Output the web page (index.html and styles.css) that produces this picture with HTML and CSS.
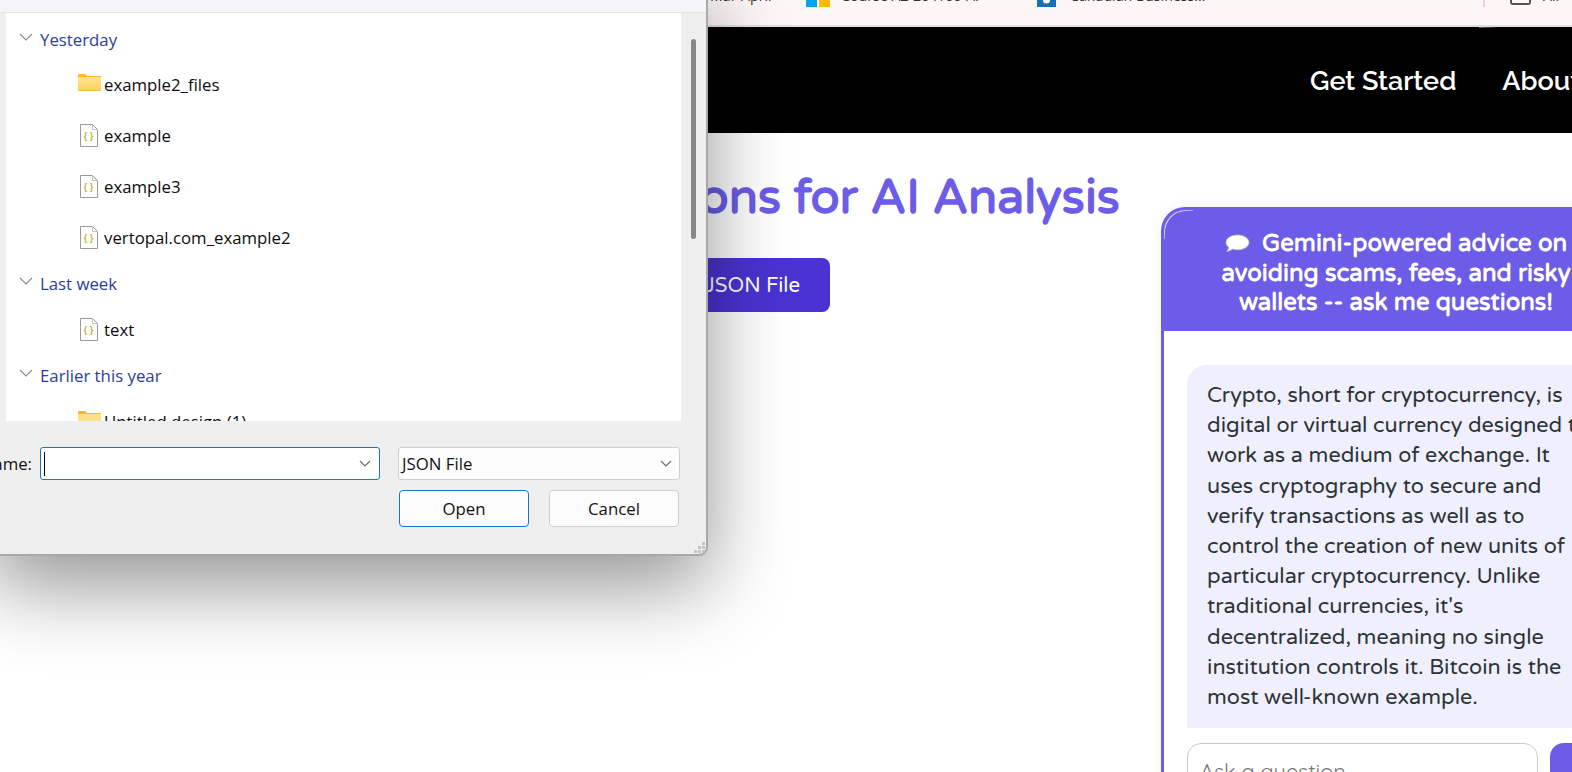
FILE: index.html
```html
<!DOCTYPE html>
<html lang="en">
<head>
<meta charset="utf-8">
<title>Upload Transactions for AI Analysis</title>
<link rel="stylesheet" href="styles.css">
</head>
<body>
<div class="browser-bar">
  <div class="bookmark bm-april"><span class="bm-text">Transit. Mar-April</span></div>
  <div class="bookmark bm-course">
    <svg class="bm-icon" width="24" height="7" viewBox="0 0 24 7"><rect width="11" height="7" fill="#00a4ef"/><rect x="13" width="11" height="7" fill="#ffb900"/></svg>
    <span class="bm-text">Course AZ-204T00-A:</span>
  </div>
  <div class="bookmark bm-canadian">
    <svg class="bm-icon" width="19" height="7" viewBox="0 0 19 7"><rect width="19" height="7" fill="#1b6fb8"/><circle cx="9.5" cy="0" r="3.5" fill="#fff"/></svg>
    <span class="bm-text">Canadian Business...</span>
  </div>
  <div class="bar-more">»</div>
  <div class="bar-sep"></div>
  <div class="bm-all"><span class="folder-mini"></span><span class="bm-text">All</span></div>
</div>
<header class="site-nav">
  <a class="nav-link">Get Started</a>
  <a class="nav-link">About</a>
</header>
<main class="page">
  <section class="upload">
    <h1 class="upload-title">Upload Transactions for AI Analysis</h1>
    <button class="upload-btn">Upload JSON File</button>
  </section>
  <aside class="chat">
    <div class="chat-head">
      <svg class="chat-bubble" width="25" height="19" viewBox="0 0 25 19"><path d="M12.5 1C6 1 1 4.300 1 8.500c0 1.900 1 3.500 2.700 4.800-.2 1.700-1 3.100-2 4 2.400-.2 4.400-1.100 5.800-2.300 1.500.5 3.200.8 5 .8 6.500 0 11.500-3.300 11.500-7.300S19 1 12.500 1z" fill="#fff" stroke="#c9c4a8" stroke-width=".7"/></svg>
      Gemini-powered advice on avoiding scams, fees, and risky wallets -- ask me questions!
    </div>
    <div class="chat-body">
      <div class="chat-msg">Crypto, short for cryptocurrency, is digital or virtual currency designed to work as a medium of exchange. It uses cryptography to secure and verify transactions as well as to control the creation of new units of particular cryptocurrency. Unlike traditional currencies, it's decentralized, meaning no single institution controls it. Bitcoin is the most well-known example.</div>
      <div class="chat-form">
        <div class="chat-input">Ask a question...</div>
        <button class="chat-send">Send</button>
      </div>
    </div>
  </aside>
</main>
<div class="dialog">
  <div class="dlg-top"></div>
  <div class="dlg-main">
    <div class="dlg-list">
      <div class="group">
        <svg class="chev" width="14" height="8" viewBox="0 0 14 8"><path d="M1 1l6 6 6-6" fill="none" stroke="#8a8a8a" stroke-width="1.100"/></svg>
        <span>Yesterday</span>
      </div>
      <div class="file file-first">
        <svg class="ico-folder" width="23" height="17" viewBox="0 0 23 17"><defs><linearGradient id="fg" x1="0" y1="0" x2="0" y2="1"><stop offset="0" stop-color="#ffe48f"/><stop offset=".9" stop-color="#fdd262"/><stop offset="1" stop-color="#f5b73a"/></linearGradient></defs><path d="M0 1.500Q0 0 1.500 0H7l2 2h14v15H0z" fill="#fbb91f"/><path d="M0 3h23v14H0z" fill="url(#fg)"/></svg>
        <span>example2_files</span>
      </div>
      <div class="file">
        <svg class="ico-json" width="18" height="23" viewBox="0 0 18 23"><path d="M.5.500h12l5 5v17H.500z" fill="#fff" stroke="#9a9a9a"/><path d="M12.500.500v5h5" fill="none" stroke="#c8c8c8"/><text x="8.500" y="15" class="ico-braces">{ }</text></svg>
        <span>example</span>
      </div>
      <div class="file">
        <svg class="ico-json" width="18" height="23" viewBox="0 0 18 23"><path d="M.5.500h12l5 5v17H.500z" fill="#fff" stroke="#9a9a9a"/><path d="M12.500.500v5h5" fill="none" stroke="#c8c8c8"/><text x="8.500" y="15" class="ico-braces">{ }</text></svg>
        <span>example3</span>
      </div>
      <div class="file">
        <svg class="ico-json" width="18" height="23" viewBox="0 0 18 23"><path d="M.5.500h12l5 5v17H.500z" fill="#fff" stroke="#9a9a9a"/><path d="M12.500.500v5h5" fill="none" stroke="#c8c8c8"/><text x="8.500" y="15" class="ico-braces">{ }</text></svg>
        <span>vertopal.com_example2</span>
      </div>
      <div class="group group-next">
        <svg class="chev" width="14" height="8" viewBox="0 0 14 8"><path d="M1 1l6 6 6-6" fill="none" stroke="#8a8a8a" stroke-width="1.100"/></svg>
        <span>Last week</span>
      </div>
      <div class="file file-solo">
        <svg class="ico-json" width="18" height="23" viewBox="0 0 18 23"><path d="M.5.500h12l5 5v17H.500z" fill="#fff" stroke="#9a9a9a"/><path d="M12.500.500v5h5" fill="none" stroke="#c8c8c8"/><text x="8.500" y="15" class="ico-braces">{ }</text></svg>
        <span>text</span>
      </div>
      <div class="group group-next">
        <svg class="chev" width="14" height="8" viewBox="0 0 14 8"><path d="M1 1l6 6 6-6" fill="none" stroke="#8a8a8a" stroke-width="1.100"/></svg>
        <span>Earlier this year</span>
      </div>
      <div class="file file-cut">
        <svg class="ico-folder" width="23" height="17" viewBox="0 0 23 17"><path d="M0 1.500Q0 0 1.500 0H7l2 2h14v15H0z" fill="#fbb91f"/><path d="M0 3h23v14H0z" fill="#ffe08a"/></svg>
        <span>Untitled design (1)</span>
      </div>
    </div>
    <div class="dlg-scroll"><div class="dlg-thumb"></div></div>
  </div>
  <div class="dlg-foot">
    <div class="foot-row">
      <span class="name-label">File name:</span>
      <div class="name-input">
        <span class="caret"></span>
        <svg width="12" height="7" viewBox="0 0 12 7"><path d="M1 1l5 5 5-5" fill="none" stroke="#666" stroke-width="1.100"/></svg>
      </div>
      <div class="type-select">
        <span>JSON File</span>
        <svg width="12" height="7" viewBox="0 0 12 7"><path d="M1 1l5 5 5-5" fill="none" stroke="#666" stroke-width="1.100"/></svg>
      </div>
    </div>
    <div class="foot-actions">
      <button class="dlg-btn dlg-primary">Open</button>
      <button class="dlg-btn">Cancel</button>
    </div>
    <svg class="grip" width="12" height="12" viewBox="0 0 12 12" fill="#c4c4c4"><rect x="8" width="3" height="3"/><rect x="4" y="4" width="3" height="3"/><rect x="8" y="4" width="3" height="3"/><rect y="8" width="3" height="3"/><rect x="4" y="8" width="3" height="3"/><rect x="8" y="8" width="3" height="3"/></svg>
  </div>
</div>
</body>
</html>
```
FILE: styles.css
```css
* { box-sizing: border-box; }
html, body { margin: 0; height: 100%; }
body {
  width: 1572px;
  height: 772px;
  overflow: hidden;
  background: #fff;
  position: relative;
  font-family: "Open Sans", "Noto Sans", sans-serif;
}

/* browser bookmarks strip, cropped at the top edge */
.browser-bar {
  height: 27px;
  background: #fdf6f6;
  border-bottom: 2px solid #e6dcdc;
  display: flex;
  align-items: flex-start;
  overflow: hidden;
  font-family: "Open Sans", sans-serif;
  font-size: 14.200px;
  color: #333;
}
.bookmark { display: flex; align-items: flex-start; gap: 10px; }
.bm-text { margin-top: -13px; line-height: 18px; white-space: nowrap; }
.bm-april { margin-left: 640px; width: 166px; padding-left: 17px; }
.bm-course { width: 231px; gap: 11px; }
.bm-canadian { width: 409px; gap: 14px; }
.bar-more { width: 37px; margin-top: -13px; line-height: 18px; color: #666; }
.bar-sep { width: 2px; height: 7px; background: #f3c9de; }
.bm-all { display: flex; gap: 12px; margin-left: 25px; }
.folder-mini {
  width: 21px; height: 5px;
  border: 2px solid #555; border-top: 0;
  border-radius: 0 0 3px 3px;
}

/* site page */
.site-nav {
  height: 106px;
  background: #000;
  display: flex;
  align-items: center;
  gap: 46px;
  padding: 0 0 0 1310px;
  white-space: nowrap;
  overflow: hidden;
  position: relative;
}
.site-nav::before {
  content: "";
  position: absolute;
  left: 1479px;
  top: 0;
  width: 18px;
  height: 1px;
  background: linear-gradient(90deg, #666, #111);
}
.nav-link {
  color: #fff;
  font-family: "Raleway", "Lato", sans-serif;
  font-size: 27px;
  font-weight: 600;
  line-height: 1;
}
.page {
  display: flex;
  align-items: flex-start;
  height: 639px;
  overflow: hidden;
}
.upload {
  width: 1161px;
  flex: none;
  padding-top: 35px;
  padding-left: 316px;
}
.upload-title {
  margin: 0;
  font-family: "Varela Round", "Nunito", "Noto Sans", sans-serif;
  font-size: 48px;
  line-height: 60px;
  font-weight: 700;
  color: #6c5ce7;
  white-space: nowrap;
}
.upload-btn {
  display: block;
  margin: 30px 0 0 292px;
  width: 222px;
  height: 54px;
  border: 0;
  border-radius: 8px;
  background: #4a33d2;
  color: #fff;
  font-family: "Varela Round", "Nunito", sans-serif;
  font-size: 20.500px;
  padding: 0 30px 0 0;
  text-align: right;
  white-space: nowrap;
}
.chat {
  width: 470px;
  flex: none;
  margin-top: 74px;
  border: 3px solid #6c5ce7;
  border-radius: 24px 0 0 0;
  border-right: 0;
  box-shadow: 0 0 14px rgba(0,0,0,.06);
  height: 600px;
  overflow: hidden;
  font-family: "Varela Round", "Nunito", "Noto Sans", sans-serif;
  position: relative;
}
.chat::before {
  content: "";
  position: absolute;
  left: 0;
  top: 0;
  width: 28px;
  height: 28px;
  border-top: 1px solid #e8e6fb;
  border-left: 1px solid #e8e6fb;
  border-radius: 22px 0 0 0;
  -webkit-mask-image: linear-gradient(135deg, #000 30%, transparent 70%);
}
.chat-head {
  background: #6c5ce7;
  color: #fff;
  font-weight: 700;
  font-size: 24px;
  line-height: 29.500px;
  text-align: center;
  padding: 20px 50px 0;
  height: 122px;
  margin-top: -1px;
  width: 464px;
}
.chat-bubble { vertical-align: -2px; margin-right: 6px; }
.chat-body { padding: 34px 0 0 23px; }
.chat-msg {
  width: 441px;
  height: 363px;
  background: #f0effe;
  border-radius: 20px 0 0 0;
  padding: 15px 30px 0 20px;
  color: #2d3436;
  font-size: 21.600px;
  line-height: 30.200px;
}
.chat-form { display: flex; gap: 12px; margin-top: 15px; }
.chat-input {
  width: 351px;
  height: 50px;
  flex: none;
  border: 1px solid #ccc;
  border-radius: 14px;
  padding: 15px 12px;
  font-family: "Quicksand", "Varela Round", sans-serif;
  font-size: 21.600px;
  line-height: 24px;
  color: #777;
}
.chat-send {
  width: 60px;
  height: 50px;
  border: 0;
  border-radius: 14px 0 0 0;
  background: #6c5ce7;
  color: #6c5ce7;
}

/* file dialog floats over the page */
.dialog {
  position: absolute;
  left: -10px;
  top: -20px;
  width: 718px;
  height: 576px;
  background: #efefef;
  border: 1px solid #a8a8a8;
  border-width: 0 2px 2px 0;
  border-radius: 0 0 9px 0;
  box-shadow: 0 30px 80px rgba(0,0,0,.42);
  display: flex;
  flex-direction: column;
  font-family: "Open Sans", "Noto Sans", sans-serif;
  color: #111;
}
.dlg-top {
  height: 33px;
  flex: none;
  background: #f4f5f7;
  border-bottom: 1px solid #e2e2e2;
}
.dlg-main {
  height: 408px;
  flex: none;
  display: flex;
  overflow: hidden;
  padding-left: 16px;
}
.dlg-list {
  width: 675px;
  flex: none;
  background: #fff;
  padding: 15px 0 0 13px;
  font-size: 16.800px;
  overflow: hidden;
}
.dlg-scroll { flex: 1; background: #efefef; padding: 26px 0 0 10px; }
.dlg-thumb { width: 5px; height: 200px; background: #878787; border-radius: 3px; }
.group {
  display: flex;
  align-items: center;
  height: 22px;
  color: #2a3d9c;
  gap: 7px;
}
.group-next { margin-top: 23px; }
.chev { flex: none; margin-top: -5px; }
.file {
  display: flex;
  align-items: center;
  height: 24px;
  margin-top: 27px;
  padding-left: 61px;
  gap: 6px;
  color: #0c0c0c;
  white-space: nowrap;
}
.file-first { margin-top: 22px; padding-left: 59px; gap: 3px; }
.file-solo { margin-top: 23px; }
.file-cut { margin-top: 23px; padding-left: 59px; gap: 3px; }
.ico-folder { flex: none; margin-top: -3px; }
.ico-json { flex: none; }
.ico-braces {
  font-family: "Liberation Sans", sans-serif;
  font-size: 9px;
  font-weight: 700;
  fill: #b7b53b;
  text-anchor: middle;
}
.dlg-foot {
  flex: 1;
  position: relative;
  padding: 26px 27px 0 0;
}
.foot-row { display: flex; align-items: center; height: 33px; }
.name-label {
  margin-left: -38px;
  width: 80px;
  font-size: 16.800px;
  text-align: right;
  white-space: nowrap;
  flex: none;
  margin-right: 8px;
}
.name-input {
  width: 340px;
  height: 33px;
  flex: none;
  background: #fff;
  border: 1px solid #1677c9;
  border-radius: 3px;
  display: flex;
  align-items: center;
  justify-content: space-between;
  padding: 0 8px 0 3px;
}
.caret { width: 1px; height: 24px; background: #000; }
.type-select {
  margin-left: 18px;
  width: 282px;
  height: 33px;
  flex: none;
  background: #fdfdfd;
  border: 1px solid #cfcfcf;
  border-radius: 3px;
  display: flex;
  align-items: center;
  justify-content: space-between;
  padding: 0 7px 0 3px;
  font-size: 16.800px;
}
.foot-actions {
  display: flex;
  justify-content: flex-end;
  gap: 20px;
  margin-top: 10px;
}
.dlg-btn {
  width: 130px;
  height: 37px;
  background: #fcfcfc;
  border: 1px solid #cfcfcf;
  border-radius: 4px;
  font-family: inherit;
  font-size: 16.800px;
  color: #111;
  padding: 0;
}
.dlg-primary { border-color: #1677c9; }
.grip { position: absolute; right: 0; bottom: 0; }
```
